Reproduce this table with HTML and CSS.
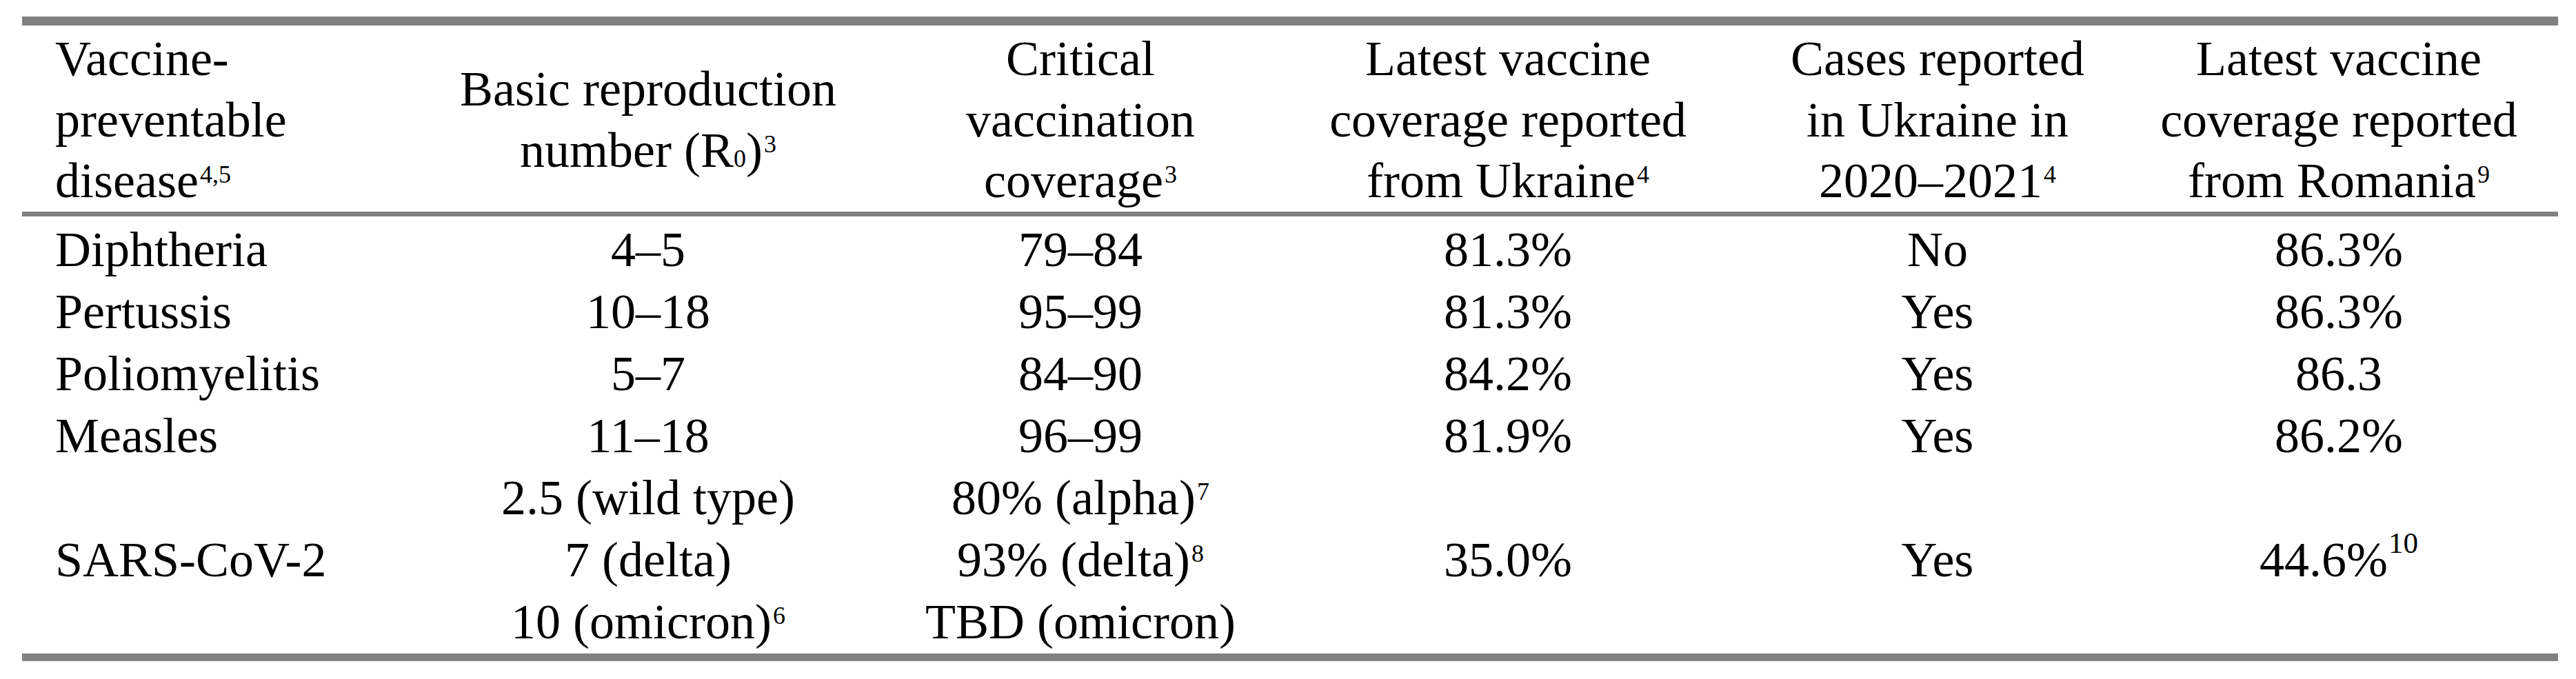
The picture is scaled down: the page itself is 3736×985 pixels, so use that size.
FILE: index.html
```html
<!DOCTYPE html>
<html lang="en">
<head>
<meta charset="utf-8">
<title>Vaccine-preventable diseases</title>
<link rel="stylesheet" href="styles.css">
</head>
<body>
<table class="vtable">
  <colgroup>
    <col class="c1"><col class="c2"><col class="c3"><col class="c4"><col class="c5"><col class="c6">
  </colgroup>
  <thead>
    <tr>
      <th class="first">Vaccine-<br>preventable<br>disease<sup>4,5</sup></th>
      <th>Basic reproduction<br>number (R<sub>0</sub>)<sup>3</sup></th>
      <th>Critical<br>vaccination<br>coverage<sup>3</sup></th>
      <th>Latest vaccine<br>coverage reported<br>from Ukraine<sup>4</sup></th>
      <th>Cases reported<br>in Ukraine in<br>2020–2021<sup>4</sup></th>
      <th>Latest vaccine<br>coverage reported<br>from Romania<sup>9</sup></th>
    </tr>
  </thead>
  <tbody>
    <tr class="top">
      <td class="first">Diphtheria</td><td>4–5</td><td>79–84</td><td>81.3%</td><td>No</td><td>86.3%</td>
    </tr>
    <tr>
      <td class="first">Pertussis</td><td>10–18</td><td>95–99</td><td>81.3%</td><td>Yes</td><td>86.3%</td>
    </tr>
    <tr>
      <td class="first">Poliomyelitis</td><td>5–7</td><td>84–90</td><td>84.2%</td><td>Yes</td><td>86.3</td>
    </tr>
    <tr>
      <td class="first">Measles</td><td>11–18</td><td>96–99</td><td>81.9%</td><td>Yes</td><td>86.2%</td>
    </tr>
    <tr class="last">
      <td class="first">SARS-CoV-2</td>
      <td>2.5 (wild type)<br>7 (delta)<br>10 (omicron)<sup>6</sup></td>
      <td>80% (alpha)<sup>7</sup><br>93% (delta)<sup>8</sup><br>TBD (omicron)</td>
      <td>35.0%</td>
      <td>Yes</td>
      <td>44.6%<sup class="big">10</sup></td>
    </tr>
  </tbody>
</table>
</body>
</html>
```

FILE: styles.css
```css
html, body {
  margin: 0;
  padding: 0;
  background: #ffffff;
}

body {
  font-family: "Liberation Serif", "Times New Roman", serif;
  color: #000000;
}

.vtable {
  margin: 24px 0 0 32px;
  width: 3678px;
  table-layout: fixed;
  border-collapse: separate;
  border-spacing: 0;
  border-top: 13px solid #808080;
  border-bottom: 11px solid #808080;
  font-size: 72px;
}

.c1 { width: 542px; }
.c2 { width: 732px; }
.c3 { width: 522px; }
.c4 { width: 718px; }
.c5 { width: 528px; }
.c6 { width: 636px; }

.vtable th,
.vtable td {
  padding: 0;
  text-align: center;
  vertical-align: middle;
  font-weight: normal;
  white-space: nowrap;
}

.vtable th {
  line-height: 88.5px;
  padding-top: 4px;
  border-bottom: 7px solid #808080;
}

.vtable td {
  line-height: 90px;
}

.vtable tr.top td {
  padding-top: 3px;
}

.vtable tr.last td {
  padding-bottom: 1px;
}

.vtable .first {
  text-align: left;
  padding-left: 48px;
}

.vtable sup {
  font-size: 0.5em;
  line-height: 0;
  vertical-align: 21px;
  padding-left: 2px;
}

.vtable sup.big {
  font-size: 0.6em;
  vertical-align: 34px;
  padding-left: 1px;
}

.vtable sub {
  font-size: 0.5em;
  line-height: 0;
  vertical-align: 0;
}
```
